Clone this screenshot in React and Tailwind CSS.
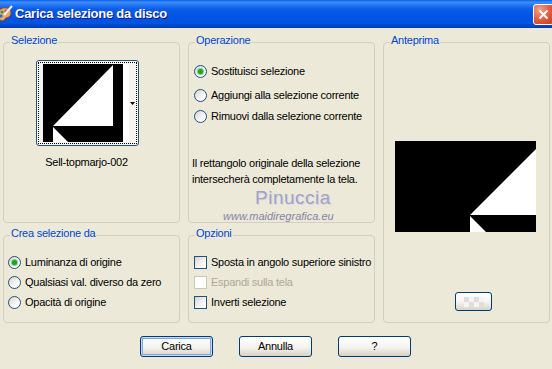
import React from "react";

const Legend = ({ children }) => (
  <span className="absolute -top-[9px] left-[6px] px-[1px] bg-[#ECE9D8] text-[#0046D5] leading-[13px] whitespace-nowrap">
    {children}
  </span>
);

const Group = ({ title, className = "", children }) => (
  <div className={`relative border border-[#D0D0BF] rounded-[4px] ${className}`}>
    <Legend>{title}</Legend>
    {children}
  </div>
);

const Radio = ({ checked }) => (
  <span className="w-[13px] h-[13px] shrink-0 rounded-full border border-[#1C5180] bg-[linear-gradient(135deg,#D6D5CE,#FFFFFF_75%)] flex items-center justify-center">
    {checked && <span className="w-[5px] h-[5px] rounded-full bg-[#21A121] shadow-[0_0_0_1px_#7FCF7F]" />}
  </span>
);

const Check = ({ disabled }) => (
  <span
    className={`w-[13px] h-[13px] shrink-0 border ${
      disabled ? "border-[#CAC8BB] bg-white" : "border-[#1C5180] bg-[linear-gradient(135deg,#D6D5CE,#FFFFFF_80%)]"
    }`}
  />
);

const Option = ({ control, children, className = "", muted }) => (
  <div className={`flex items-center gap-[4px] h-[14px] leading-[13px] whitespace-nowrap ${muted ? "text-[#ACA899]" : ""} ${className}`}>
    {control}
    <span>{children}</span>
  </div>
);

const XpButton = ({ children, primary }) => (
  <button
    className={`w-[73px] h-[21px] rounded-[3px] border border-[#003C74] bg-[linear-gradient(to_bottom,#FFFFFF,#F4F3EE_55%,#D8D2C6)] text-black leading-[13px] ${
      primary ? "shadow-[inset_0_0_0_1px_#C6DAF8,inset_0_0_0_2px_#7FA3E6]" : ""
    }`}
  >
    {children}
  </button>
);

const Thumb = () => (
  <div className="w-[103px] h-[86px] rounded-[3px] border border-[#1C5180] bg-[#F5F4EF] p-[1px]">
    <div className="h-full border border-dotted border-black">
      <svg width="97" height="80" className="block">
        <rect x="4" y="1" width="80" height="78" fill="#000" />
        <rect x="84" y="1" width="6" height="78" fill="#fff" />
        <polygon points="74,2 74,63 14,63" fill="#fff" />
        <polygon points="14,64 14,79 29,79" fill="#fff" />
        <polygon points="91,39 96,39 93.5,42" fill="#000" />
      </svg>
    </div>
  </div>
);

const TitleBar = () => (
  <div className="h-[28px] flex items-center bg-[linear-gradient(to_bottom,#0A5FEC_0%,#3D8FF8_8%,#2A7BF3_16%,#0A5DE8_32%,#0054E3_60%,#0053DF_84%,#0044C4_94%,#003AAE_100%)]">
    <svg width="16" height="18" viewBox="0 0 16 18" className="-ml-[3px] shrink-0">
      <path d="M1 9C1 4 6 2 10 3C14 4 15 8 13 11C12 13 9 12 8 14C7 17 2 16 1 12Z" fill="#E8A868" stroke="#8B4A1C" />
      <circle cx="5" cy="7" r="1.5" fill="#2E9E3E" />
      <circle cx="9" cy="6" r="1.5" fill="#E03030" />
      <circle cx="4" cy="11" r="1.5" fill="#3060E0" />
      <path d="M15 1L7 10" stroke="#F4F4F4" strokeWidth="2" />
    </svg>
    <span className="ml-[2px] text-white font-bold text-[13px] leading-[16px] [text-shadow:1px_1px_#0A1883]">
      Carica selezione da disco
    </span>
    <div className="ml-auto -mr-[2px] w-[21px] h-[21px] rounded-[3px] border border-white bg-[radial-gradient(circle_at_30%_25%,#F5A084,#E2583A_55%,#C7401F)] flex items-center justify-center">
      <svg width="11" height="11" viewBox="0 0 11 11">
        <path d="M1.5 1.5L9.5 9.5M9.5 1.5L1.5 9.5" stroke="#fff" strokeWidth="2" />
      </svg>
    </div>
  </div>
);

export default function App() {
  return (
    <div className="w-[552px] h-[369px] overflow-hidden bg-[#ECE9D8] text-black text-[11px] tracking-[-0.25px] font-[family-name:'Liberation_Sans',Arial,sans-serif]">
      <TitleBar />

      <div className="pl-[3px] pt-[14px] grid grid-cols-[177px_187px_167px] grid-rows-[181px_88px] gap-x-[8px] gap-y-[12px]">
        <Group title="Selezione">
          <div className="ml-[32px] mt-[17px] w-[103px]">
            <Thumb />
            <div className="mt-[10px] -ml-[2px] text-center leading-[13px] whitespace-nowrap">Sell-topmarjo-002</div>
          </div>
        </Group>

        <Group title="Operazione">
          <div className="flex flex-col">
            <Option className="ml-[5px] mt-[21px]" control={<Radio checked />}>Sostituisci selezione</Option>
            <Option className="ml-[5px] mt-[10px]" control={<Radio />}>Aggiungi alla selezione corrente</Option>
            <Option className="ml-[5px] mt-[7px]" control={<Radio />}>Rimuovi dalla selezione corrente</Option>
            <p className="ml-[3px] mt-[32px] leading-[16px]">
              Il rettangolo originale della selezione
              <br />
              intersecherà completamente la tela.
            </p>
            <div className="ml-[66px] mt-[2px] text-[19px] leading-[18px] tracking-[0.5px] text-[#A2A2C4] [text-shadow:1px_1px_#D8D8E6]">
              Pinuccia
            </div>
            <div className="ml-[34px] mt-[3px] italic leading-[13px] tracking-[0px] text-[#8484A6]">www.maidiregrafica.eu</div>
          </div>
        </Group>

        <Group title="Anteprima" className="row-span-2">
          <svg className="ml-[11px] mt-[98px] block" width="141" height="91">
            <rect width="141" height="91" fill="#000" />
            <polygon points="141,8 141,74 75,74" fill="#fff" />
            <polygon points="75,75 75,91 91,91" fill="#fff" />
          </svg>
          <button className="ml-[71px] mt-[60px] w-[37px] h-[19px] rounded-[3px] border border-[#003C74] bg-[linear-gradient(to_bottom,#FFFFFF,#F4F3EE_55%,#D8D2C6)] flex items-center justify-center">
            <svg width="20" height="10">
              <rect width="20" height="10" fill="#F4F4F4" />
              <rect x="0" y="0" width="5" height="5" fill="#DEDEDE" />
              <rect x="10" y="0" width="5" height="5" fill="#DEDEDE" />
              <rect x="5" y="5" width="5" height="5" fill="#DEDEDE" />
              <rect x="15" y="5" width="5" height="5" fill="#DEDEDE" />
            </svg>
          </button>
        </Group>

        <Group title="Crea selezione da">
          <div className="flex flex-col gap-[6px] pt-[19px] pl-[4px]">
            <Option control={<Radio checked />}>Luminanza di origine</Option>
            <Option control={<Radio />}>Qualsiasi val. diverso da zero</Option>
            <Option control={<Radio />}>Opacità di origine</Option>
          </div>
        </Group>

        <Group title="Opzioni">
          <div className="flex flex-col gap-[6px] pt-[19px] pl-[5px]">
            <Option control={<Check />}>Sposta in angolo superiore sinistro</Option>
            <Option control={<Check disabled />} muted>
              Espandi sulla tela
            </Option>
            <Option control={<Check />}>Inverti selezione</Option>
          </div>
        </Group>
      </div>

      <div className="mt-[13px] pl-[140px] flex gap-[26px]">
        <XpButton primary>Carica</XpButton>
        <XpButton>Annulla</XpButton>
        <XpButton>?</XpButton>
      </div>
    </div>
  );
}
